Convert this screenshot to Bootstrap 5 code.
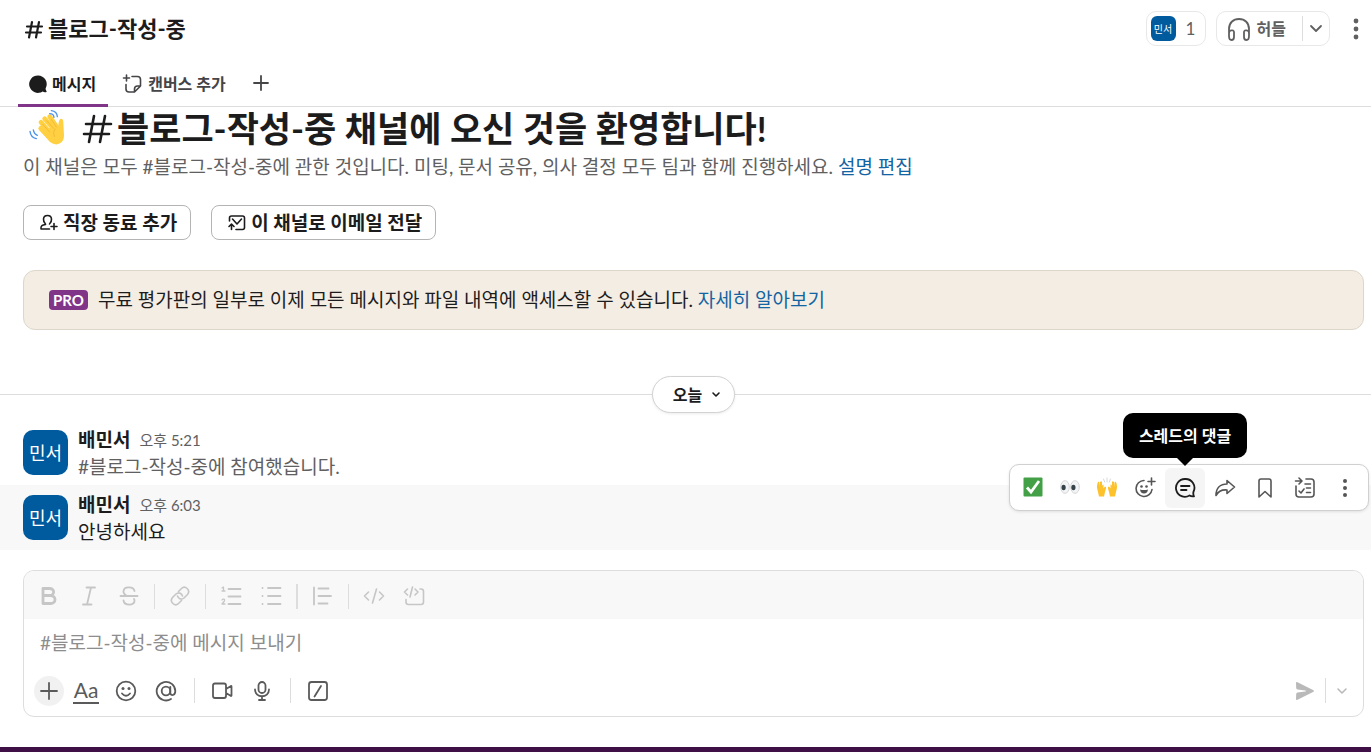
<!DOCTYPE html>
<html lang="ko">
<head>
<meta charset="utf-8">
<meta name="viewport" content="width=device-width, initial-scale=1">
<title>블로그-작성-중</title>
<link rel="stylesheet" href="https://cdn.jsdelivr.net/npm/bootstrap@5.3.0/dist/css/bootstrap.min.css">
<style>
  :root { --ink:#1d1c1d; --soft:#616061; --rule:#dddddd; --plum:#813588; --blue:#005a9e; --link:#1264a3; }
  body { font-family: Lato, "Noto Sans CJK KR", sans-serif; font-size:19px; line-height:28px; color:var(--ink); background:#fff; }
  svg { display:block; flex:none; }
  .ico { fill:none; stroke:currentColor; stroke-width:1.6; stroke-linecap:round; stroke-linejoin:round; }
  .ico-firm { stroke-width:1.8; }
  .ico-heavy { stroke-width:2.2; }
  .ico-bold { stroke-width:2.8; }
  button { font:inherit; color:inherit; background:none; border:0; padding:0; }
  a { color:var(--link); text-decoration:none; }
  .soft { color:var(--soft); }
  .gutter { padding-left:23px; padding-right:7px; }

  .topbar { height:57px; padding:0 5px 0 24px; }
  .topbar h1 { font-size:22px; line-height:28px; font-weight:700; }
  .pillbox { height:35px; border:1px solid #e8e8e8; border-radius:10px; color:var(--soft); font-size:16px; }
  .people { width:60px; margin-right:10px; }
  .people .count { font-size:17px; padding-left:2px; }
  .face { background:var(--blue); color:#fff; flex:none; }
  .face-sm { width:25px; height:25px; border-radius:6px; font-size:10px; }
  .face-lg { width:45px; height:45px; border-radius:10px; font-size:18px; }
  .vrule { width:1px; height:25px; background:var(--rule); }

  .tabs { height:50px; padding-left:18px; border-bottom:1px solid var(--rule); font-size:16px; font-weight:700; color:#454447; }
  .tabs button { padding:6px 11px 0 10px; height:50px; border-bottom:3px solid transparent; }
  .tabs .current { color:var(--ink); border-color:var(--plum); padding-right:12px; }

  .welcome { font-size:35px; line-height:42px; height:42px; font-weight:700; }
  .wave { margin:0 14px 0 4px; }
  .invite { gap:20px; }
  .outline { height:35px; border:1px solid #b4b4b5; border-radius:8px; padding:0 13px 0 15px; font-weight:700; }
  .trial { margin-top:30px; background:#f4ede4; border:1px solid #ddd6cb; border-radius:12px; height:60px; padding:0 25px; gap:10px; }
  .pro { background:var(--plum); color:#fff; border-radius:4px; font-size:15px; line-height:20px; font-weight:700; padding:0 4px; }

  .day { height:37px; margin-top:46px; }
  .day::before { content:""; position:absolute; left:0; right:0; top:18px; border-top:1px solid var(--rule); }
  .day button { width:83px; height:37px; padding-left:8px; gap:8px; line-height:24px; background:#fff; border:1px solid #d2d2d2; border-radius:19px; box-shadow:0 1px 3px rgba(0,0,0,.08); font-size:16px; font-weight:700; }

  .feed { padding-top:7px; }
  .post { padding:10px 23px 9px; height:65px; gap:10px; }
  .post.hovered { background:#f8f8f8; }
  .post .who { font-weight:700; line-height:20px; margin-right:9px; }
  .post time { font-size:15px; line-height:20px; }
  .post p { line-height:28px; margin-top:3px; }
  .actions { right:2px; top:-21px; background:#fff; border:1px solid #d0d0d0; border-radius:10px; padding:3px 3px 2px 4px; box-shadow:0 1px 3px rgba(0,0,0,.1); color:#555; }
  .actions button { width:40px; height:40px; border-radius:6px; }
  .actions .react { width:37px; }
  .actions .on { background:#f5f5f5; color:var(--ink); }
  .tip { bottom:50px; left:50%; transform:translateX(-50%); width:124px; height:45px; border-radius:10px; background:#000; color:#fff; font-size:16px; font-weight:700; }
  .tip::after { content:""; position:absolute; top:100%; left:50%; margin-left:-8px; border:8px solid transparent; border-top-color:#000; border-bottom:0; }

  .compose-wrap { padding-top:20px; padding-bottom:30px; }
  .composer { border:1px solid var(--rule); border-radius:11px; overflow:hidden; }
  .format { background:#f8f8f8; height:48px; padding:2px 5px 0; color:#c6c6c6; }
  .format button, .tools button { width:40px; height:35px; }
  .format .vrule { margin:0 5px; }
  .format .vrule-thick { width:2px; }
  .composer textarea { display:block; width:100%; height:48px; padding:10px 16px; border:0; resize:none; outline:0; }
  .composer textarea::placeholder { color:#8d8d8d; opacity:1; }
  .tools { height:49px; padding:0 5px 2px; color:#5a5a5a; }
  .tools .round { width:30px; height:30px; margin:0 2px 0 5px; border-radius:50%; background:#f1f1f1; }
  .tools .mid-rule { margin:0 7px 0 8px; }
  .tools .sched { width:32px; }
  .tools .faint { color:#b9b9b9; }
  .aa { font-size:21px; line-height:24px; padding:0 1px; border-bottom:2px solid currentColor; }
  .base { height:5px; background:#3f1045; }
</style>
</head>
<body class="d-flex flex-column min-vh-100">
<header>
  <div class="topbar d-flex align-items-center">
    <h1 class="d-flex align-items-center gap-1 mb-0 me-auto">
      <svg class="ico ico-heavy" width="20" height="20" viewBox="0 0 20 20"><path d="M8 3 5 18.500M15 3l-3 15.500M3 7.500h15M2 13.500h15"/></svg>블로그-작성-중</h1>
    <button class="pillbox people d-flex align-items-center ps-1 gap-2"><span class="face face-sm d-flex align-items-center justify-content-center">민서</span><span class="count">1</span></button>
    <div class="pillbox d-flex align-items-center">
      <button class="d-flex align-items-center fw-bold gap-1 ps-2 pe-3"><svg class="ico ico-firm" width="28" height="26" viewBox="0 0 28 26"><path d="M4 20V13C4 7 8 3 14 3s10 4 10 10v7M8 14.500q-4-1-4 3v2.500q0 4 2.500 4T9 21v-5q0-1-1-1.500M20 14.500q4-1 4 3v2.500q0 4-2.500 4T19 21v-5q0-1 1-1.500"/></svg>허들</button>
      <span class="vrule"></span>
      <button class="px-1" aria-label="허들 옵션"><svg class="ico ico-firm" width="18" height="18" viewBox="0 0 18 18"><path d="m4 6 5 5 5-5"/></svg></button>
    </div>
    <button class="ms-3 soft" aria-label="더 보기"><svg width="20" height="24" viewBox="0 0 20 24" fill="currentColor"><circle cx="10" cy="4" r="2.400"/><circle cx="10" cy="12" r="2.400"/><circle cx="10" cy="20" r="2.400"/></svg></button>
  </div>
  <nav class="tabs d-flex">
    <button class="current d-flex align-items-center gap-1"><svg width="20" height="20" viewBox="0 0 20 20" fill="currentColor"><path d="M10 1.500a8.700 8.700 0 1 0 4.600 16c1.500 1 3.200.8 3.800.4.400-.3.300-.7 0-1-.6-.8-.8-1.500-.8-2.400A8.700 8.700 0 0 0 10 1.500"/></svg>메시지</button>
    <button class="d-flex align-items-center gap-1 ms-1"><svg class="ico" width="22" height="20" viewBox="0 0 22 20"><path d="M4.500 1v6M1.500 4h6M10 2.500h5.500q3 0 3 3v6.500l-6 6H7q-3 0-3-3v-4.500M18 12h-2.500q-3 0-3 3v2.500"/></svg>캔버스 추가</button>
    <button class="d-flex align-items-center ms-1" aria-label="탭 추가"><svg class="ico ico-firm" width="20" height="20" viewBox="0 0 20 20"><path d="M10 2v14M3 9h14"/></svg></button>
  </nav>
</header>

<main>
  <section class="gutter">
    <h2 class="welcome d-flex align-items-center mb-0">
      <svg class="wave" width="40" height="40" viewBox="82 28 120 120"><g stroke="#ffd042" stroke-linecap="round" stroke-width="14" fill="none"><path d="m123 89 30 30M124 71l33 38M135 60l33 38M150 54l25 36"/></g><path fill="#ffd042" d="M119 94 176 84q0-21 7-24 8-1 8 12l2 38q0 18-12 24-14 8-30-4z"/><path d="M129 77l21 23M141 66l21 23M155 62l15 23M166 91q-8 10-2 23" stroke="#f3ad32" stroke-width="2" fill="none" stroke-linecap="round"/><g fill="none" stroke="#4c94e8" stroke-width="4" stroke-linecap="round"><path d="M155 36q17 2 18 18M150 45q12 0 13 11M91 98q2 18 19 22M101 94q2 12 12 16"/></g></svg>
      <svg class="ico me-1" width="32" height="32" viewBox="0 0 32 32"><g stroke-width="2.600"><path d="M13 4 8 30M24 4l-5 26M5 12h25M3 22h25"/></g></svg>블로그-작성-중 채널에 오신 것을 환영합니다!</h2>
    <p class="soft mb-0 pt-1">이 채널은 모두 #블로그-작성-중에 관한 것입니다. 미팅, 문서 공유, 의사 결정 모두 팀과 함께 진행하세요. <a href="#">설명 편집</a></p>
    <div class="invite d-flex pt-4">
      <button class="outline d-flex align-items-center gap-1"><svg class="ico" width="20" height="20" viewBox="0 0 20 20"><path d="M8.500 2.500c-5.500 0-4.500 6.500-2 8.500v.5c-3 .5-5 1-4.500 4.500h8.500M8.500 2.500c5.500 0 4.500 6.500 2 8.500M15 10.500v6M12 13.500h6"/></svg><span>직장 동료 추가</span></button>
      <button class="outline d-flex align-items-center gap-1"><svg class="ico" width="20" height="20" viewBox="0 0 20 20"><path d="M2.500 8V5q0-2 2-2h11q2 0 2 2v9.500q0 2-2 2H9M5.500 6l4.500 5 4.500-5M2 13.500l2.500-2.500L7 13.500M4.500 11v5.500"/></svg><span>이 채널로 이메일 전달</span></button>
    </div>
    <div class="trial d-flex align-items-center"><span class="pro">PRO</span><span>무료 평가판의 일부로 이제 모든 메시지와 파일 내역에 액세스할 수 있습니다. <a href="#">자세히 알아보기</a></span></div>
  </section>

  <div class="day position-relative gutter d-flex justify-content-center">
    <button class="position-relative d-flex align-items-center justify-content-center">오늘<svg class="ico" width="12" height="12" viewBox="0 0 12 12"><path d="m3 4 3 3 3-3"/></svg></button>
  </div>

  <section class="feed">
  <article class="post d-flex">
    <span class="face face-lg d-flex align-items-center justify-content-center">민서</span>
    <div><div class="d-flex align-items-center"><span class="who">배민서</span><time class="soft">오후 5:21</time></div>
    <p class="soft mb-0">#블로그-작성-중에 참여했습니다.</p></div>
  </article>
  <article class="post hovered d-flex position-relative">
    <span class="face face-lg d-flex align-items-center justify-content-center">민서</span>
    <div><div class="d-flex align-items-center"><span class="who">배민서</span><time class="soft">오후 6:03</time></div>
    <p class="mb-0">안녕하세요</p></div>
    <div class="actions position-absolute d-flex">
      <button class="react d-flex align-items-center justify-content-center" aria-label="완료"><svg width="20" height="22" viewBox="0 0 20 22"><rect x=".5" y=".5" width="19" height="19" rx="1" fill="#43a047"/><path d="m4 10.500 4 4.500 8-11" fill="none" stroke="#fff" stroke-width="2.800"/></svg></button>
      <button class="react d-flex align-items-center justify-content-center" aria-label="보는 중"><svg width="20" height="22" viewBox="0 0 20 22"><g fill="#f4f4f4" stroke="#c9ccce" stroke-width=".8"><ellipse cx="5" cy="10" rx="4.300" ry="6.300"/><ellipse cx="15" cy="10" rx="4.300" ry="6.300"/></g><g fill="#35424a"><ellipse cx="3.600" cy="10.500" rx="2.100" ry="2.800"/><ellipse cx="13.400" cy="10.500" rx="2.100" ry="2.800"/></g></svg></button>
      <button class="react d-flex align-items-center justify-content-center" aria-label="잘했어요"><svg width="22" height="22" viewBox="0 0 22 22"><path fill="#fdc12c" d="M2 5q1.300-1 1.500 1l.5 4V5q1.500-1.500 2 0v4q.5-2 1.500-1.500v4L9 9.500q1.500 0 1 2L9 15l-1 4.500H3L2 15Q0 9 2 5M20 5q-1.300-1-1.500 1L18 10V5q-1.500-1.500-2 0v4q-.5-2-1.500-1.500v4L13 9.500q-1.500 0-1 2l1 3.500 1 4.500h5l1-4.500q2-6 0-10"/><path d="M11 1v4M7.500 2l1.200 3M14.500 2l-1.200 3" stroke="#d5d8da" stroke-linecap="round"/></svg></button>
      <button class="d-flex align-items-center justify-content-center" aria-label="반응 찾기"><svg class="ico" width="22" height="22" viewBox="0 0 22 22"><path d="M10 3.500a8 8 0 1 0 8 9M17.500 1v7M14 4.500h7"/><path d="M6 12.500q4 1.200 8 0-.5 4-4 4t-4-4" fill="currentColor" stroke="none"/><g fill="currentColor" stroke="none"><circle cx="7.500" cy="9.500" r="1.300"/><circle cx="12.500" cy="9.500" r="1.300"/></g></svg></button>
      <button class="on position-relative d-flex align-items-center justify-content-center" aria-label="스레드의 댓글"><svg class="ico ico-firm" width="22" height="22" viewBox="0 0 22 22"><path d="M11 2a8.900 8.900 0 1 0 4.500 16.500q1.700 1.200 4.500.9-1-1.700-.6-4.400A8.900 8.900 0 0 0 11 2M7 9h8.500M7 13h5.500"/></svg><span class="tip position-absolute d-flex align-items-center justify-content-center" role="tooltip">스레드의 댓글</span></button>
      <button class="d-flex align-items-center justify-content-center" aria-label="전달"><svg class="ico" width="22" height="22" viewBox="0 0 22 22"><path d="M13 3.500 20.500 10 13 16.500V13C8 12.500 4.500 14 2 18.500 2 11 6.500 7 13 7z"/></svg></button>
      <button class="d-flex align-items-center justify-content-center" aria-label="나중을 위해 저장"><svg class="ico" width="22" height="22" viewBox="0 0 22 22"><path d="M5 4q0-2 2-2h8q2 0 2 2v16l-6-5.500L5 20z"/></svg></button>
      <button class="d-flex align-items-center justify-content-center" aria-label="목록에 추가"><svg class="ico" width="22" height="22" viewBox="0 0 22 22"><path d="M12 2h5q3 0 3 3v12q0 3-3 3H5q-3 0-3-3V9M1.500 4h6M5 1l3 3-3 3M11 7h5.500M12.500 11h4M12.500 15.500h4M5 14l2 2 3-4"/></svg></button>
      <button class="d-flex align-items-center justify-content-center" aria-label="추가 작업"><svg width="20" height="22" viewBox="0 0 20 22" fill="currentColor"><circle cx="10" cy="4" r="2"/><circle cx="10" cy="11" r="2"/><circle cx="10" cy="18" r="2"/></svg></button>
    </div>
  </article>
  </section>

  <section class="gutter compose-wrap">
    <form class="composer">
      <div class="format d-flex align-items-center">
        <button type="button" class="d-flex align-items-center justify-content-center" aria-label="굵게"><svg class="ico ico-bold" width="22" height="22" viewBox="0 0 22 22"><path d="M5 3.500h6.500c5.500 0 5.500 7 0 7H5zM5 10.500h7.500c6 0 6 8 0 8H5z"/></svg></button>
        <button type="button" class="d-flex align-items-center justify-content-center" aria-label="기울임꼴"><svg class="ico ico-firm" width="22" height="22" viewBox="0 0 22 22"><path d="M8.500 2.500h8.500M5 19.500h8.500M13 2.500l-4 17"/></svg></button>
        <button type="button" class="d-flex align-items-center justify-content-center" aria-label="취소선"><svg class="ico ico-firm" width="22" height="22" viewBox="0 0 22 22"><path d="M2.500 11h17M16.500 6c-1-5-11-5-11 .5 0 2 1 3.300 4 4.500M5.500 15.500c.8 5.500 11.500 5.500 11 0q0-1-.5-1.500"/></svg></button>
        <span class="vrule"></span>
        <button type="button" class="d-flex align-items-center justify-content-center" aria-label="링크"><svg class="ico" width="22" height="22" viewBox="0 0 22 22"><path d="m9.500 6.500 3-3c3.500-3.500 9.500 1.500 6 6l-3.500 3.500c-2.500 2-5.500 1-6.500-2M12.500 15.500l-3 3c-3.500 3.500-9.500-1.500-6-6L7 9c2.500-2 5.500-1 6.500 2"/></svg></button>
        <span class="vrule"></span>
        <button type="button" class="d-flex align-items-center justify-content-center" aria-label="번호 매기기 목록"><svg class="ico" width="22" height="22" viewBox="0 0 22 22"><path d="M8.500 4h12M8.500 11.500h12M8.500 19h12" stroke-width="1.800"/><path d="M2 3l1.500-1v4M2 6h3M2 15c1-1.500 3-.8 2.500.8L2 19h3" stroke-width="1.300"/></svg></button>
        <button type="button" class="d-flex align-items-center justify-content-center" aria-label="글머리 기호 목록"><svg class="ico ico-firm" width="22" height="22" viewBox="0 0 22 22"><path d="M8 3h12.500M8 11h12.500M8 19h12.500M2.500 3h.1M2.500 11h.1M2.500 19h.1"/></svg></button>
        <span class="vrule vrule-thick"></span>
        <button type="button" class="d-flex align-items-center justify-content-center" aria-label="인용"><svg class="ico ico-firm" width="22" height="22" viewBox="0 0 22 22"><path d="M2 2.500v17M6.500 3.500h10M6.500 11h12.500M6.500 18.500h9"/></svg></button>
        <span class="vrule"></span>
        <button type="button" class="d-flex align-items-center justify-content-center" aria-label="코드"><svg class="ico" width="22" height="22" viewBox="0 0 22 22"><path d="M5.500 7 1.500 11l4 4M16.500 7l4 4-4 4M13.500 4l-4 14"/></svg></button>
        <button type="button" class="d-flex align-items-center justify-content-center" aria-label="코드 블록"><svg class="ico" width="22" height="22" viewBox="0 0 22 22"><path d="M4.500 4 1.500 7l3 3M12 4l3 3-3 3M9.500 2l-2.500 10M17 4h1q2.500 0 2.500 2.500V17q0 2.500-2.500 2.500H5.500Q3 19.500 3 17v-2.500"/></svg></button>
      </div>
      <textarea aria-label="메시지" placeholder="#블로그-작성-중에 메시지 보내기"></textarea>
      <div class="tools d-flex align-items-center">
        <button type="button" class="round d-flex align-items-center justify-content-center" aria-label="첨부"><svg class="ico ico-firm" width="20" height="20" viewBox="0 0 20 20"><path d="M10 2v16M2 10h16"/></svg></button>
        <button type="button" class="d-flex align-items-center justify-content-center" aria-label="서식"><span class="aa">Aa</span></button>
        <button type="button" class="d-flex align-items-center justify-content-center" aria-label="이모티콘"><svg class="ico ico-firm" width="22" height="22" viewBox="0 0 22 22"><circle cx="11" cy="11" r="9.300"/><path d="M7 13.500q4 4.500 8 0"/><g fill="currentColor" stroke="none"><circle cx="8" cy="8.500" r="1.500"/><circle cx="14" cy="8.500" r="1.500"/></g></svg></button>
        <button type="button" class="d-flex align-items-center justify-content-center" aria-label="멘션"><svg class="ico ico-firm" width="22" height="22" viewBox="0 0 22 22"><circle cx="11" cy="11" r="4.300"/><path d="M15.300 6.800V13c.5 3.500 5 2.500 5-2A9.300 9.300 0 1 0 16 19"/></svg></button>
        <span class="vrule mid-rule"></span>
        <button type="button" class="d-flex align-items-center justify-content-center" aria-label="비디오"><svg class="ico ico-firm" width="22" height="22" viewBox="0 0 22 22"><path d="M4 3.500h9q2 0 2 2v10.500q0 2-2 2H4q-2 0-2-2V5.500q0-2 2-2M15 9l5-3q.5 0 .5.500v9q0 .5-.5.500l-5-3"/></svg></button>
        <button type="button" class="d-flex align-items-center justify-content-center" aria-label="오디오"><svg class="ico ico-firm" width="22" height="22" viewBox="0 0 22 22"><rect x="7.500" y="2" width="7" height="11" rx="3.500"/><path d="M4 9.500c0 9 14 9 14 0M11 16.500v3.500M8 20h6"/></svg></button>
        <span class="vrule mid-rule"></span>
        <button type="button" class="d-flex align-items-center justify-content-center" aria-label="바로 가기"><svg class="ico ico-firm" width="22" height="22" viewBox="0 0 22 22"><rect x="2" y="2" width="18" height="18" rx="2.500"/><path d="m14 6-6.500 10.500"/></svg></button>
        <button type="submit" class="faint ms-auto d-flex align-items-center justify-content-center" aria-label="보내기"><svg width="22" height="22" viewBox="0 0 22 22" fill="currentColor"><path d="M2 3q0-1.300 1.500-.7L19.500 10.200q1 .8 0 1.600L3.500 19.700Q2 20.300 2 19l.2-5q.1-1.200 1.300-1.400L11.500 11.500q1-.5 0-1L3.500 9.400Q2.300 9.200 2.200 8z"/></svg></button>
        <span class="vrule"></span>
        <button type="button" class="faint sched d-flex align-items-center justify-content-center" aria-label="나중에 보내기"><svg class="ico" width="14" height="14" viewBox="0 0 14 14"><path d="m3 5 4 4 4-4"/></svg></button>
      </div>
    </form>
  </section>
</main>
<footer class="base mt-auto"></footer>
<script src="https://cdn.jsdelivr.net/npm/bootstrap@5.3.0/dist/js/bootstrap.bundle.min.js"></script>
</body>
</html>
